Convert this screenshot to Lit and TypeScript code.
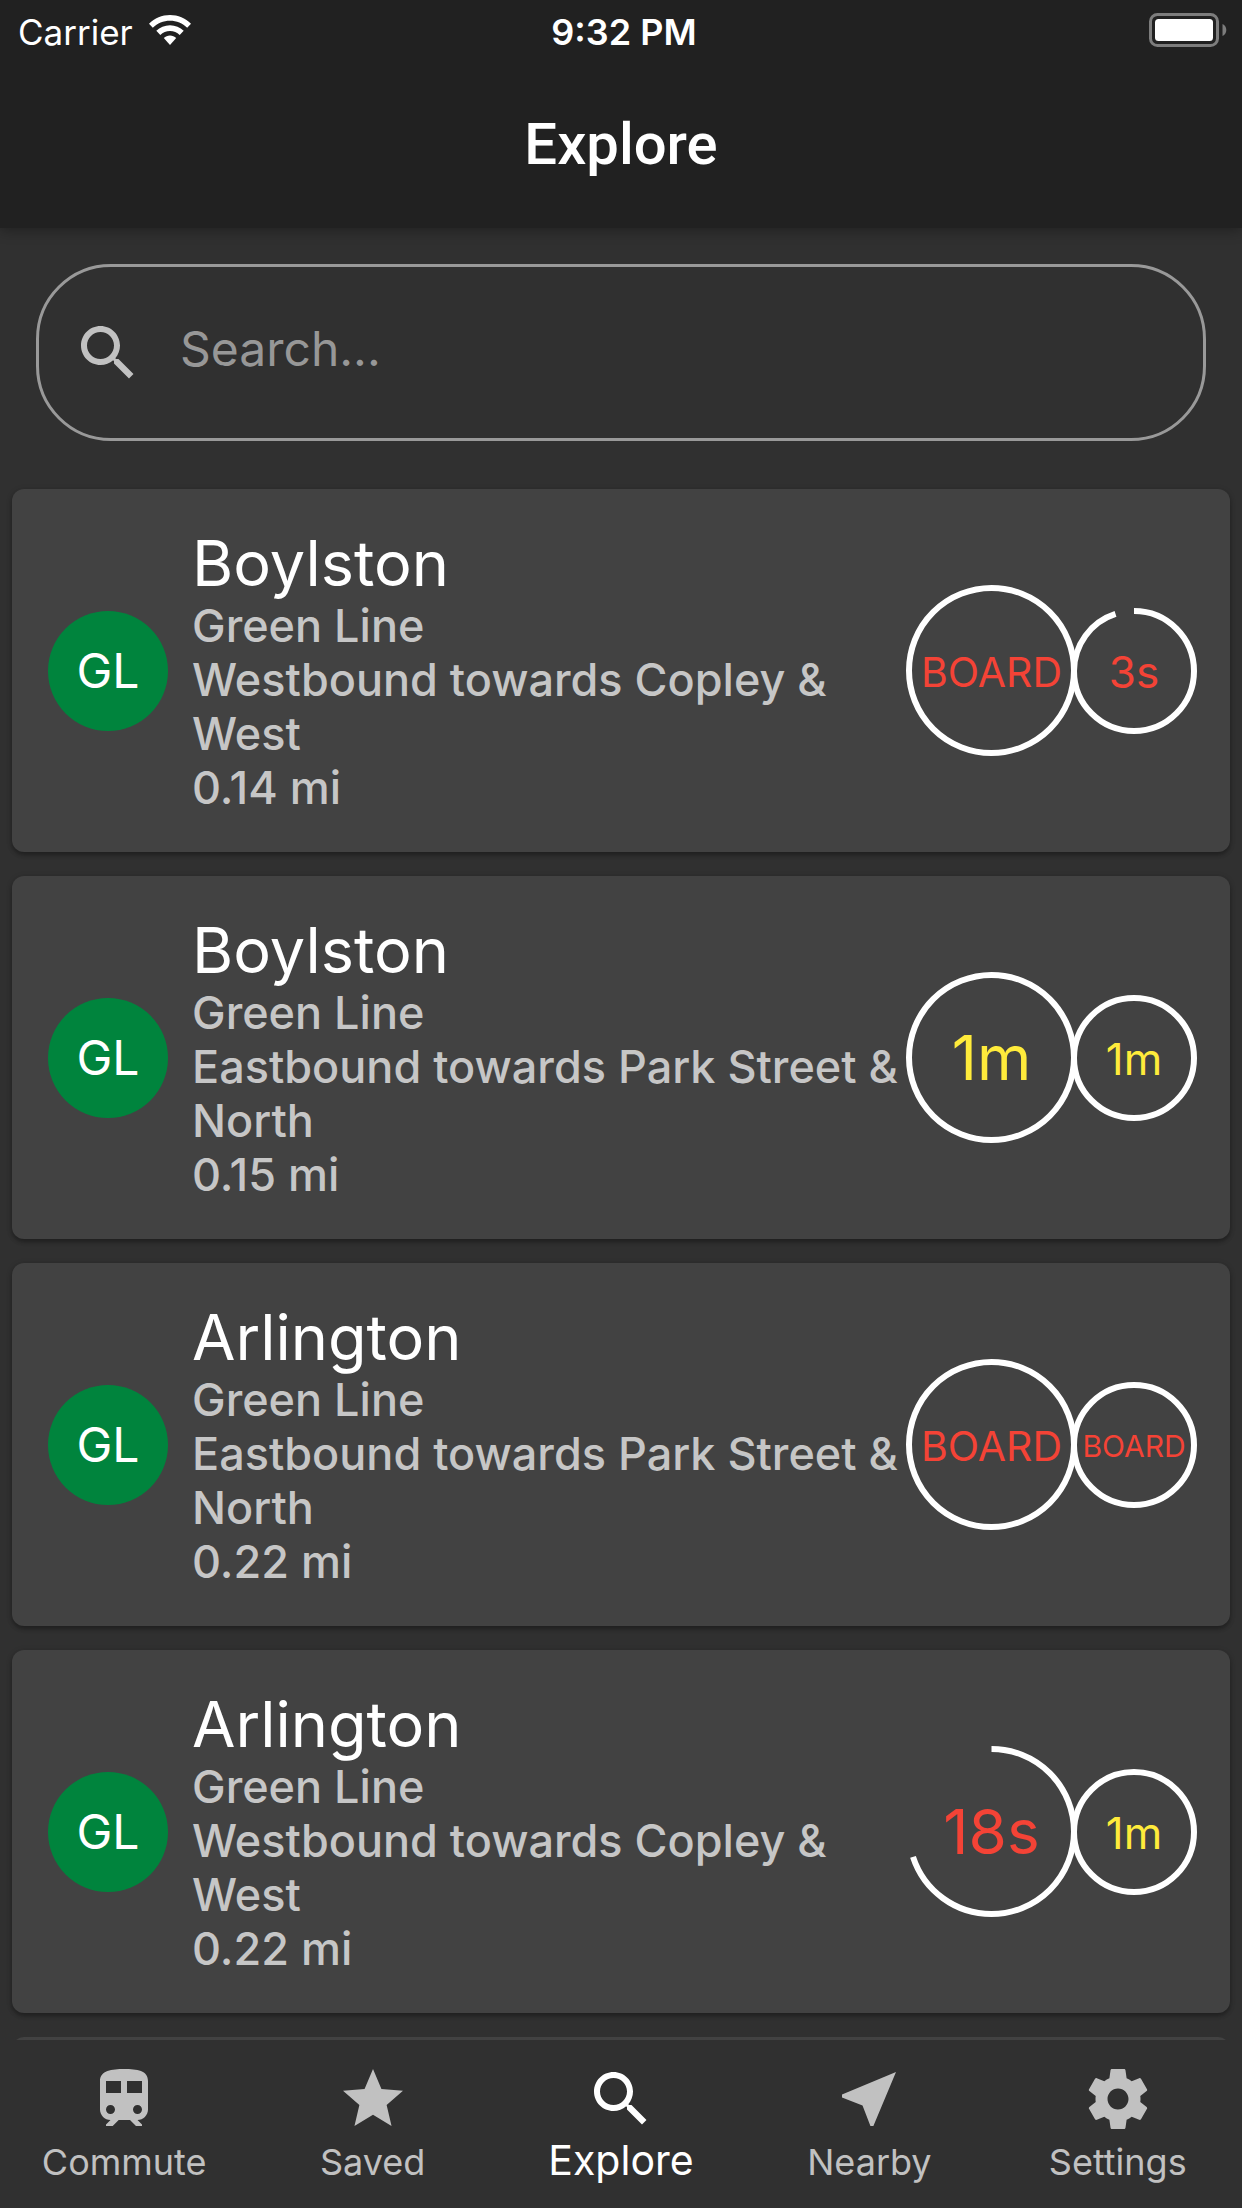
import { LitElement, html, svg, css } from "lit";
import { customElement, property } from "lit/decorators.js";

interface Arrival {
  text: string;
  tone: "soon" | "later";
  fraction: number;
}

interface Stop {
  name: string;
  line: string;
  badge: string;
  direction: string;
  distance: string;
  arrivals: [Arrival, Arrival];
}

const boarding: Arrival = { text: "BOARD", tone: "soon", fraction: 1 };
const oneMinute: Arrival = { text: "1m", tone: "later", fraction: 1 };

const WEST = "Westbound towards Copley & West";
const EAST = "Eastbound towards Park Street & North";

const stops: Stop[] = [
  { name: "Boylston", line: "Green Line", badge: "GL", direction: WEST, distance: "0.14 mi", arrivals: [boarding, { text: "3s", tone: "soon", fraction: 0.95 }] },
  { name: "Boylston", line: "Green Line", badge: "GL", direction: EAST, distance: "0.15 mi", arrivals: [oneMinute, oneMinute] },
  { name: "Arlington", line: "Green Line", badge: "GL", direction: EAST, distance: "0.22 mi", arrivals: [boarding, boarding] },
  { name: "Arlington", line: "Green Line", badge: "GL", direction: WEST, distance: "0.22 mi", arrivals: [{ text: "18s", tone: "soon", fraction: 0.7 }, oneMinute] },
];

const icons = {
  search: svg`<path d="M15.5 14h-.79l-.28-.27C15.41 12.59 16 11.11 16 9.5 16 5.91 13.09 3 9.5 3S3 5.91 3 9.5 5.91 16 9.5 16c1.61 0 3.09-.59 4.23-1.57l.27.28v.79l5 4.99L20.49 19l-4.99-5zm-6 0C7.01 14 5 11.99 5 9.5S7.01 5 9.5 5 14 7.01 14 9.5 11.99 14 9.5 14z"/>`,
  train: svg`<path d="M12 2c-4 0-8 .5-8 4v9.5C4 17.43 5.57 19 7.5 19L6 20.5v.5h2.23l2-2H14l2 2h2v-.5L16.5 19c1.93 0 3.5-1.57 3.5-3.5V6c0-3.5-3.58-4-8-4zM7.5 17c-.83 0-1.5-.67-1.5-1.5S6.67 14 7.5 14s1.5.67 1.5 1.5S8.33 17 7.5 17zm3.5-7H6V6h5v4zm2 0V6h5v4h-5zm3.5 7c-.83 0-1.5-.67-1.5-1.5s.67-1.5 1.5-1.5 1.5.67 1.5 1.5-.67 1.5-1.5 1.5z"/>`,
  star: svg`<path d="M12 17.27L18.18 21l-1.64-7.03L22 9.24l-7.19-.61L12 2 9.19 8.63 2 9.24l5.46 4.73L5.82 21z"/>`,
  near: svg`<path d="M21 3L3 10.53v.98l6.84 2.65L12.48 21h.98L21 3z"/>`,
  gear: svg`<path d="M19.43 12.98c.04-.32.07-.64.07-.98s-.03-.66-.07-.98l2.11-1.65c.19-.15.24-.42.12-.64l-2-3.46c-.12-.22-.39-.3-.61-.22l-2.49 1c-.52-.4-1.08-.73-1.69-.98l-.38-2.65C14.46 2.18 14.25 2 14 2h-4c-.25 0-.46.18-.49.42l-.38 2.65c-.61.25-1.17.59-1.69.98l-2.49-1c-.23-.09-.49 0-.61.22l-2 3.46c-.13.22-.07.49.12.64l2.11 1.65c-.04.32-.07.65-.07.98s.03.66.07.98l-2.11 1.65c-.19.15-.24.42-.12.64l2 3.46c.12.22.39.3.61.22l2.49-1c.52.4 1.08.73 1.69.98l.38 2.65c.03.24.24.42.49.42h4c.25 0 .46-.18.49-.42l.38-2.65c.61-.25 1.17-.59 1.69-.98l2.49 1c.23.09.49 0 .61-.22l2-3.46c.12-.22.07-.49-.12-.64l-2.11-1.65zM12 15.5c-1.93 0-3.5-1.57-3.5-3.5s1.57-3.5 3.5-3.5 3.5 1.57 3.5 3.5-1.57 3.5-3.5 3.5z"/>`,
};

const tabs: { label: string; icon: keyof typeof icons; href: string }[] = [
  { label: "Commute", icon: "train", href: "#commute" },
  { label: "Saved", icon: "star", href: "#saved" },
  { label: "Explore", icon: "search", href: "#explore" },
  { label: "Nearby", icon: "near", href: "#nearby" },
  { label: "Settings", icon: "gear", href: "#settings" },
];

const icon = (name: keyof typeof icons) =>
  html`<svg class="icon" viewBox="0 0 24 24" aria-hidden="true">${icons[name]}</svg>`;

/** Countdown ring: the stroke runs clockwise from the top for the given fraction. */
@customElement("countdown-ring")
class CountdownRing extends LitElement {
  @property({ attribute: false }) arrival!: Arrival;
  @property({ type: Boolean }) large = false;

  static styles = css`
    :host { display: block; flex: none; }
    .ring { display: grid; place-items: center; width: 120px; height: 120px; }
    .ring.large { width: 165px; height: 165px; }
    .ring > * { grid-area: 1 / 1; }
    .arc { width: 100%; height: 100%; overflow: visible; transform: rotate(-90deg); }
    .arc circle { fill: none; stroke: #fff; stroke-width: 6px; }
    .text { font-size: 44px; line-height: 48px; padding-top: 3px; }
    .large .text { font-size: 62px; line-height: 72px; padding-top: 0; }
    .text.word { font-size: 30px; }
    .large .text.word { font-size: 41px; line-height: 48px; padding-top: 3px; }
    .soon { color: #f44336; }
    .later { color: #ffeb3b; }
  `;

  render() {
    const size = this.large ? 165 : 120;
    const { text, tone, fraction } = this.arrival;
    return html`
      <div class="ring ${this.large ? "large" : ""}">
        <svg class="arc" viewBox="0 0 ${size} ${size}" aria-hidden="true">
          <circle cx=${size / 2} cy=${size / 2} r=${size / 2} pathLength="100"
            stroke-dasharray=${fraction < 1 ? `${fraction * 100} 100` : "none"}></circle>
        </svg>
        <span class="text ${tone} ${text.length > 3 ? "word" : ""}">${text}</span>
      </div>
    `;
  }
}

@customElement("stop-card")
class StopCard extends LitElement {
  @property({ attribute: false }) stop!: Stop;

  static styles = css`
    :host { display: block; }
    .card {
      display: flex;
      align-items: center;
      box-sizing: border-box;
      min-height: 363px;
      padding: 36px;
      border-radius: 12px;
      background: #424242;
      box-shadow: 0 3px 4px rgba(0, 0, 0, 0.28), 0 1px 6px rgba(0, 0, 0, 0.14);
    }
    .badge {
      display: grid;
      place-items: center;
      flex: none;
      width: 120px;
      height: 120px;
      border-radius: 50%;
      background: #00843d;
      color: #fff;
      font-size: 48px;
      line-height: 60px;
    }
    .info { flex: 1; min-width: 0; padding-left: 24px; }
    .name { margin: 0; font-size: 63px; line-height: 72px; font-weight: 400; color: #fff; }
    .detail { margin: 0; font-size: 45px; line-height: 54px; font-weight: 500; color: #c6c6c6; }
  `;

  render() {
    const s = this.stop;
    return html`
      <article class="card">
        <div class="badge">${s.badge}</div>
        <div class="info">
          <h2 class="name">${s.name}</h2>
          <p class="detail">${s.line}</p>
          <p class="detail">${s.direction}</p>
          <p class="detail">${s.distance}</p>
        </div>
        <countdown-ring large .arrival=${s.arrivals[0]}></countdown-ring>
        <countdown-ring .arrival=${s.arrivals[1]}></countdown-ring>
      </article>
    `;
  }
}

@customElement("app-root")
class AppRoot extends LitElement {
  static styles = css`
    :host {
      display: flex;
      flex-direction: column;
      height: 100vh;
      overflow: hidden;
      background: #303030;
      color: #fff;
      font-family: Inter, Roboto, "Liberation Sans", sans-serif;
    }
    .top { flex: none; background: #212121; box-shadow: 0 3px 12px rgba(0, 0, 0, 0.3); }
    .status {
      display: grid;
      grid-template-columns: 1fr auto 1fr;
      align-items: center;
      height: 60px;
      padding: 0 12px 0 18px;
      font-size: 35px;
      line-height: 42px;
    }
    .carrier { display: flex; align-items: center; gap: 16px; }
    .carrier span, .time { padding-top: 3px; }
    .wifi { width: 42px; height: 30px; fill: #fff; }
    .time { font-size: 36px; font-weight: 600; }
    .battery { justify-self: end; width: 81px; height: 34px; }
    .bar { display: grid; place-items: center; height: 168px; }
    .title { margin: 0; font-family: Roboto, Inter, sans-serif; font-size: 58px; line-height: 72px; font-weight: 500; }
    .content { flex: 1; min-height: 0; overflow: hidden; }
    .search {
      display: flex;
      align-items: center;
      gap: 36px;
      box-sizing: border-box;
      height: 177px;
      margin: 36px 36px 48px;
      padding: 0 33px;
      border: 3px solid #999;
      border-radius: 75px;
    }
    .icon { display: block; flex: none; width: 72px; height: 72px; fill: #c1c1c1; }
    .field {
      flex: 1;
      min-width: 0;
      height: 72px;
      padding: 0 0 9px;
      border: 0;
      outline: 0;
      background: none;
      color: #fff;
      font: inherit;
      font-size: 48px;
    }
    .field::placeholder { color: #979797; opacity: 1; }
    .list {
      display: flex;
      flex-direction: column;
      gap: 24px;
      margin: 0;
      padding: 0 12px;
      list-style: none;
    }
    .next { height: 363px; border-radius: 12px; background: #424242; }
    .tabs {
      position: relative;
      flex: none;
      display: grid;
      grid-template-columns: repeat(5, 1fr);
      height: 168px;
      background: #303030;
    }
    .tab {
      display: flex;
      flex-direction: column;
      align-items: center;
      padding-top: 23px;
      color: #c1c1c1;
      font-size: 36px;
      line-height: 54px;
      text-decoration: none;
    }
    .tab.active { color: #fff; font-size: 41px; line-height: 50px; }
    .tab.active .icon { fill: #fff; }
  `;

  render() {
    return html`
      <header class="top">
        <div class="status">
          <div class="carrier">
            <span>Carrier</span>
            <svg class="wifi" viewBox="0 0 42 30" role="img" aria-label="Wi-Fi">
              <path d="M21 0C13 0 5.6 3.200 0 8.800L3.800 12.800C8.400 8.300 14.400 5.800 21 5.800S33.600 8.300 38.200 12.800L42 8.800C36.400 3.200 29 0 21 0Z"/>
              <path d="M21 10.200C15.700 10.200 10.900 12.300 7.300 15.800L11.300 19.900C13.900 17.500 17.300 16 21 16S28.100 17.500 30.700 19.900L34.700 15.800C31.100 12.300 26.300 10.200 21 10.200Z"/>
              <path d="M21 20.400C18.600 20.400 16.400 21.300 14.800 22.900L21 30L27.200 22.900C25.600 21.300 23.400 20.400 21 20.400Z"/>
            </svg>
          </div>
          <span class="time">9:32 PM</span>
          <svg class="battery" viewBox="0 0 81 34" role="img" aria-label="Battery full">
            <rect x="1.500" y="1.500" width="67" height="31" rx="7" fill="none" stroke="#7d7d7d" stroke-width="3"/>
            <rect x="6" y="6" width="58" height="22" rx="3.500" fill="#fff"/>
            <path d="M73.500 11C78.600 13 78.600 21 73.500 23Z" fill="#7d7d7d"/>
          </svg>
        </div>
        <div class="bar"><h1 class="title">Explore</h1></div>
      </header>
      <main class="content">
        <label class="search">
          ${icon("search")}
          <input class="field" type="search" placeholder="Search..." aria-label="Search" />
        </label>
        <ul class="list">
          ${stops.map((s) => html`<li><stop-card .stop=${s}></stop-card></li>`)}
          <li class="next"></li>
        </ul>
      </main>
      <nav class="tabs">
        ${tabs.map(
          (t) => html`
            <a class="tab ${t.label === "Explore" ? "active" : ""}" href=${t.href}>
              ${icon(t.icon)}
              <span class="label">${t.label}</span>
            </a>
          `
        )}
      </nav>
    `;
  }
}
